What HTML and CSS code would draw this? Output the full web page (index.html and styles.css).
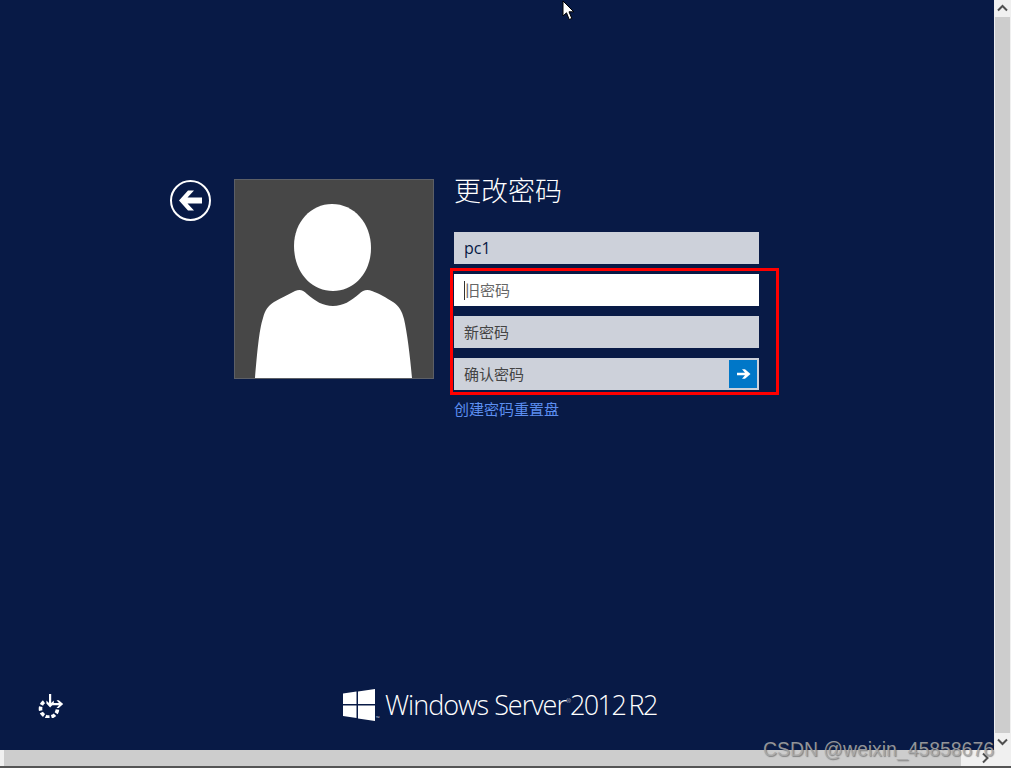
FILE: index.html
```html
<!DOCTYPE html>
<html lang="zh-CN">
<head>
  <meta charset="UTF-8" />
  <title>更改密码</title>
  <link rel="stylesheet" href="styles.css">
</head>
<body>
  <div class="window">
    <div class="top-row">
      <main class="stage">
        <section class="panel">
          <button class="back-btn" aria-label="返回">
            <svg width="41" height="41" viewBox="0 0 41 41">
              <circle cx="20.5" cy="20.5" r="19.5" fill="none" stroke="#fff" stroke-width="2"/>
              <path d="M9 20.5 L18 10.5 H24 L17.5 17.5 H32 V23.5 H17.5 L24 30.5 H18 Z" fill="#fff"/>
            </svg>
          </button>

          <div class="avatar">
            <svg width="198" height="198" viewBox="0 0 198 198">
              <path d="M97 24 C119 24 136 43 136 68 C136 93 119 111 98 111 C76 111 59 92 59 66 C59 42 76 24 97 24 Z" fill="#fff"/>
              <path d="M20 198 C22 175 24 150 28 138 C30 130 33 126 39 122 C46 118 54 114 60 111 C65 109 68 110 72 114 C80 121 88 126 98 126 C108 126 116 121 124 114 C128 110 132 109 137 111 C143 113 152 118 158 122 C164 126 167 131 169 139 C172 152 175 175 177 198 Z" fill="#fff"/>
            </svg>
          </div>

          <form class="pw-form">
            <h1 class="title">更改密码</h1>
            <div class="field field-user">pc1</div>
            <div class="field field-active"><span class="caret"></span>旧密码</div>
            <div class="field">新密码</div>
            <div class="field field-submit">
              <span>确认密码</span>
              <span class="go-btn">
                <svg width="15" height="12" viewBox="0 0 15 12">
                  <path d="M1 4.7 H9 L6 1.2 H9 L14.5 6 L9 10.8 H6 L9 7.3 H1 Z" fill="#fff"/>
                </svg>
              </span>
            </div>
            <a class="reset-link" href="#">创建密码重置盘</a>
          </form>
        </section>

        <footer class="footer">
          <svg class="ease-icon" width="26" height="26" viewBox="0 0 26 26">
            <path d="M6 9.8 A8.5 8.5 0 1 0 19.5 17" fill="none" stroke="#fff" stroke-width="3.6" stroke-dasharray="4 1.9"/>
            <path d="M11 2 H13.2 V11 L15.8 8.6 V11.4 L12.1 15.4 L8.4 11.4 V8.6 L11 11 Z" fill="#fff"/>
            <path d="M13 11 H21 L18.5 8.2 H20.8 L25.2 12.1 L20.8 16 H18.5 L21 13.2 H13 Z" fill="#fff"/>
          </svg>
          <div class="brand">
            <svg class="win-logo" width="34" height="34" viewBox="0 0 34 34">
              <path d="M1 5.5 L14.5 3.6 V16 H1 Z M16 3.4 L33 1 V16 H16 Z M1 17.5 H14.5 V30 L1 28 Z M16 17.5 H33 V33 L16 30.4 Z" fill="#fff"/>
            </svg>
            <span class="tm">™</span>
            <span class="brand-name">Windows Server<sup class="reg">®</sup></span>
            <span class="brand-ver">2012 R2</span>
          </div>
        </footer>
      </main>

      <div class="vscroll">
        <svg class="arrow" width="17" height="17" viewBox="0 0 17 17"><path d="M4 10.5 L8.5 6 L13 10.5" fill="none" stroke="#505050" stroke-width="2"/></svg>
        <div class="vthumb"></div>
        <svg class="arrow" width="17" height="17" viewBox="0 0 17 17"><path d="M4 6.5 L8.5 11 L13 6.5" fill="none" stroke="#505050" stroke-width="2"/></svg>
      </div>
    </div>

    <div class="hscroll">
      <div class="hthumb"></div>
      <svg class="arrow" width="17" height="16" viewBox="0 0 17 16"><path d="M6 3.5 L10.5 8 L6 12.5" fill="none" stroke="#505050" stroke-width="2"/></svg>
      <div class="corner"></div>
    </div>
    <div class="bottom-line"></div>
  </div>

  <!-- overlays from the annotated screenshot -->
  <div class="red-box"></div>
  <svg class="cursor" width="14" height="22" viewBox="0 0 14 22">
    <path d="M1 1 V16 L4.5 12.8 L7.2 19.5 L9.8 18.4 L7 11.8 H11.8 Z" fill="#fff" stroke="#000" stroke-width="1"/>
  </svg>
  <div class="watermark">CSDN @weixin_45858676</div>
</body>
</html>
```

FILE: styles.css
```css
* {
  box-sizing: border-box;
}

html, body {
  height: 100%;
}

body {
  margin: 0;
  overflow: hidden;
  font-family: "Noto Sans CJK SC", "Liberation Sans", sans-serif;
  background-color: #fff;
}

.window {
  height: 768px;
  display: flex;
  flex-direction: column;
}

.top-row {
  display: flex;
  height: 750px;
}

.stage {
  width: 994px;
  background-color: #081a46;
  display: flex;
  flex-direction: column;
  justify-content: space-between;
}

.panel {
  display: flex;
  align-items: flex-start;
  padding: 179px 0 0 170px;
}

.back-btn {
  width: 41px;
  height: 41px;
  margin: 1px 23px 0 0;
  padding: 0;
  background: none;
  border: none;
  display: flex;
}

.avatar {
  width: 200px;
  height: 200px;
  margin-right: 20px;
  background-color: #474747;
  border: 1px solid #5c5f66;
  display: flex;
}

.pw-form {
  width: 305px;
  display: flex;
  flex-direction: column;
  gap: 10px;
}

.title {
  margin: 0 0 7px;
  height: 36px;
  line-height: 21px;
  font-size: 27px;
  font-weight: 300;
  color: #fff;
}

.field {
  height: 32px;
  padding-left: 10px;
  background-color: #cdd1da;
  color: #444;
  font-size: 15px;
  line-height: 32px;
  display: flex;
  align-items: center;
}

.field-user {
  color: #071945;
  font-family: "Open Sans", "Liberation Sans", sans-serif;
  font-size: 16px;
}

.field-active {
  background-color: #fff;
  color: #666;
}

.caret {
  width: 1px;
  height: 19px;
  background-color: #333;
}

.field-submit {
  justify-content: space-between;
  padding-right: 2px;
}

.go-btn {
  width: 28px;
  height: 28px;
  background-color: #0077c8;
  display: flex;
  align-items: center;
  justify-content: center;
}

.reset-link {
  margin-top: -1px;
  font-size: 15px;
  line-height: 19px;
  color: #5c8ef0;
  text-decoration: none;
}

.footer {
  display: flex;
  align-items: center;
  padding: 0 0 28px 38px;
}

.ease-icon {
  margin-right: 278px;
}

.brand {
  position: relative;
  display: flex;
  align-items: center;
  color: #fff;
  font-family: "Open Sans", "Liberation Sans", sans-serif;
  font-weight: 300;
  font-size: 27px;
  line-height: 34px;
}

.win-logo {
  margin-right: 9px;
}

.tm {
  position: absolute;
  left: 34px;
  top: 27px;
  font-size: 5px;
  line-height: 6px;
}

.brand-name {
  letter-spacing: -1px;
}

.reg {
  font-size: 6px;
  line-height: 0;
  vertical-align: 12px;
}

.brand-ver {
  letter-spacing: -1.6px;
  word-spacing: -2px;
}

.vscroll {
  width: 17px;
  background-color: #f0f0f0;
  display: flex;
  flex-direction: column;
  align-items: center;
}

.arrow {
  flex: none;
}

.vthumb {
  flex: 1;
  width: 15px;
  background-color: #cdcdcd;
}

.hscroll {
  height: 16px;
  background-color: #f0f0f0;
  display: flex;
}

.hthumb {
  width: 957px;
  margin-left: 4px;
  background-color: #cdcdcd;
}

.hscroll .arrow {
  margin-left: 16px;
}

.corner {
  width: 17px;
}

.bottom-line {
  height: 2px;
  background-color: #555;
}

.red-box {
  position: absolute;
  left: 450px;
  top: 268px;
  width: 329px;
  height: 127px;
  border: 3px solid #ff0000;
}

.cursor {
  position: absolute;
  left: 562px;
  top: 0;
}

.watermark {
  position: absolute;
  left: 763px;
  top: 737px;
  font-family: "Liberation Sans", sans-serif;
  font-size: 19.4px;
  line-height: 24px;
  color: rgba(170, 170, 170, 0.85);
  text-shadow: 1px 1px 1px rgba(60, 60, 60, 0.5);
}
```
